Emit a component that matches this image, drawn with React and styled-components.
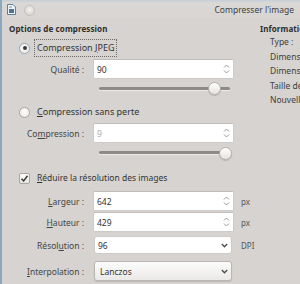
import React from 'react';
import styled, { createGlobalStyle } from 'styled-components';

const Global = createGlobalStyle`
  html, body { margin: 0; padding: 0; background: #d6d3d0; }
  body {
    width: 300px; height: 284px; overflow: hidden;
    font-family: "Noto Sans", "Open Sans", sans-serif;
    font-size: 8.5px; color: #3b3b3b;
  }
`;

const Window = styled.div`
  width: 300px; height: 284px; box-sizing: border-box;
  display: flex; flex-direction: column;
  border-left: 2px solid #8ea7ba;
  background: #d6d3d0; overflow: hidden;
`;

const TitleBar = styled.div`
  height: 19px; flex-shrink: 0;
  display: flex; align-items: center; gap: 8px;
  padding: 0 4px 0 5px;
  background: linear-gradient(#c3cfd9 0, #dad8d5 3px, #d8d5d2 100%);
`;

const Title = styled.div`
  margin-left: auto; padding-right: 2px;
  font-size: 8.5px; color: #404040; white-space: nowrap;
`;

const Body = styled.div`
  flex: 1; display: flex; padding-left: 7px;
`;

const LeftCol = styled.div`
  width: 251px; flex-shrink: 0; display: flex; flex-direction: column;
`;

const RightCol = styled.div`
  flex: 1; overflow: hidden; white-space: nowrap;
  display: flex; flex-direction: column;
`;

const Heading = styled.div`
  height: 12px; line-height: 12px; margin-top: 4px;
  font-weight: bold; font-size: 8px; color: #2e2e2e; letter-spacing: 0.1px;
  white-space: nowrap;
`;

const InfoItem = styled.div`
  height: 14.6px; line-height: 14.6px; padding-left: 10px;
  color: #404040;
  &:first-of-type { margin-top: 2px; }
`;

const OptionRow = styled.div`
  height: 16px; margin-top: ${p => p.$mt}px;
  display: flex; align-items: center; padding-left: 10px; gap: 4px;
`;

const Radio = styled.span`
  width: 11px; height: 11px; border-radius: 50%; box-sizing: border-box;
  border: 1px solid #a9a6a3;
  background: radial-gradient(circle at 50% 40%, #ffffff 0, #eeeceb 70%, #dedcda 100%);
  box-shadow: 0 0 0 1px ${p => (p.$checked ? '#c5d3de' : 'transparent')};
  display: flex; align-items: center; justify-content: center;
  &::after {
    content: ""; width: 4px; height: 4px; border-radius: 50%;
    background: ${p => (p.$checked ? '#3a3a3a' : 'transparent')};
  }
`;

const Check = styled.span`
  width: 11px; height: 11px; box-sizing: border-box; border-radius: 2px;
  border: 1px solid #a9a6a3;
  background: linear-gradient(#ffffff, #e6e4e2);
  display: flex; align-items: center; justify-content: center;
`;

const OptionLabel = styled.span`
  padding: 1px 2px; height: 14px; line-height: 14px;
  border: 1px ${p => (p.$focus ? 'dotted #6a6a6a' : 'solid transparent')};
  font-size: ${p => p.$size || 9}px; color: #333; white-space: nowrap;
`;

const FieldRow = styled.div`
  display: grid; grid-template-columns: 76px 142px auto;
  column-gap: 7px; align-items: center;
  height: ${p => p.$h || 20}px; margin-top: ${p => p.$mt}px;
`;

const FieldLabel = styled.span`
  text-align: right; white-space: nowrap; color: #454545;
  padding-right: 1px;
`;

const Input = styled.div`
  height: 100%; box-sizing: border-box;
  display: flex; align-items: center; padding-left: 3px;
  margin-left: 1px;
  background: #fff;
  border: 1px solid #cdcac7; border-top-color: #bfbcb9; border-radius: 2px;
  color: ${p => (p.$disabled ? '#aaa' : '#333')};
`;

const Combo = styled.div`
  height: 100%; box-sizing: border-box;
  display: flex; align-items: center; padding-left: ${p => (p.$flat ? 3 : 5)}px;
  margin-left: 2px; margin-right: 2px;
  border-radius: 3px;
  border: 1px solid ${p => (p.$flat ? '#cdcac7' : '#b9b6b3')};
  background: ${p => (p.$flat ? '#fff' : 'linear-gradient(#fcfcfc, #ebe9e7)')};
  box-shadow: ${p => (p.$flat ? 'none' : '0 1px 1px rgba(0,0,0,0.12)')};
  color: #333;
`;

const Trailing = styled.span`
  margin-left: auto; width: 14px; display: flex; justify-content: center;
`;

const Unit = styled.span`
  color: #555; font-size: 8px;
`;

const SliderRow = styled.div`
  height: ${p => p.$h}px; display: flex; align-items: center;
  padding-left: 90px;
`;

const Track = styled.div`
  width: 131px; height: 3px; border-radius: 2px; position: relative;
  background: #8d8b89; box-shadow: 0 1px 0 #ecebea;
`;

const Handle = styled.span`
  position: absolute; top: 50%; width: 11px; height: 11px;
  margin: -6px 0 0 -6px; border-radius: 50%;
  border: 1px solid #b3b0ad;
  background: linear-gradient(#ffffff, #e5e3e1);
  box-shadow: 0 1px 1px rgba(0,0,0,0.15);
`;

const Mn = styled.span`text-decoration: underline;`;

const Spinner = () => (
  <svg width="7" height="12" viewBox="0 0 7 12">
    <path d="M1 4.5 L3.5 2 L6 4.5" fill="none" stroke="#9a9896" strokeWidth="1" />
    <path d="M1 7.5 L3.5 10 L6 7.5" fill="none" stroke="#9a9896" strokeWidth="1" />
  </svg>
);

const Chevron = () => (
  <svg width="7" height="5" viewBox="0 0 7 5">
    <path d="M0.8 1 L3.5 3.8 L6.2 1" fill="none" stroke="#4a4a4a" strokeWidth="1.3" />
  </svg>
);

const DocIcon = () => (
  <svg width="9" height="11" viewBox="0 0 9 11">
    <path d="M0.5 0.5 H6 L8.5 3 V10.5 H0.5 Z" fill="#eef3f8" stroke="#5f7f9c" />
    <rect x="2" y="5" width="5" height="4" fill="#4d7397" />
    <path d="M2 3 H5" stroke="#7c97b0" />
  </svg>
);

const CircleBtn = styled.span`
  width: 9px; height: 9px; border-radius: 50%;
  background: radial-gradient(circle at 50% 40%, #f4f3f2, #cfccca);
  border: 1px solid #c3c0bd; margin-top: 1px;
`;

const CheckMark = () => (
  <svg width="9" height="9" viewBox="0 0 9 9">
    <path d="M1.5 4.8 L3.6 7 L7.6 1.8" fill="none" stroke="#333" strokeWidth="1.4" />
  </svg>
);

export default function App() {
  return (
    <>
      <Global />
      <Window>
        <TitleBar>
          <DocIcon />
          <CircleBtn />
          <Title>Compresser l'image</Title>
        </TitleBar>
        <Body>
          <LeftCol>
            <Heading>Options de compression</Heading>

            <OptionRow $mt={5}>
              <Radio $checked />
              <OptionLabel $focus>Compression <Mn>J</Mn>PEG</OptionLabel>
            </OptionRow>
            <FieldRow $mt={3}>
              <FieldLabel>Qualité :</FieldLabel>
              <Input>90<Trailing><Spinner /></Trailing></Input>
            </FieldRow>
            <SliderRow $h={18}>
              <Track><Handle style={{ left: '88%' }} /></Track>
            </SliderRow>

            <OptionRow $mt={7}>
              <Radio />
              <OptionLabel><Mn>C</Mn>ompression sans perte</OptionLabel>
            </OptionRow>
            <FieldRow $mt={3}>
              <FieldLabel>Co<Mn>m</Mn>pression :</FieldLabel>
              <Input $disabled>9<Trailing><Spinner /></Trailing></Input>
            </FieldRow>
            <SliderRow $h={19}>
              <Track><Handle style={{ left: '96%' }} /></Track>
            </SliderRow>

            <OptionRow $mt={8}>
              <Check><CheckMark /></Check>
              <OptionLabel $size={8.5}><Mn>R</Mn>éduire la résolution des images</OptionLabel>
            </OptionRow>
            <FieldRow $mt={5}>
              <FieldLabel><Mn>L</Mn>argeur :</FieldLabel>
              <Input>642<Trailing><Spinner /></Trailing></Input>
              <Unit>px</Unit>
            </FieldRow>
            <FieldRow $mt={1}>
              <FieldLabel><Mn>H</Mn>auteur :</FieldLabel>
              <Input>429<Trailing><Spinner /></Trailing></Input>
              <Unit>px</Unit>
            </FieldRow>
            <FieldRow $mt={4} $h={18}>
              <FieldLabel>Résol<Mn>u</Mn>tion :</FieldLabel>
              <Combo $flat>96<Trailing><Chevron /></Trailing></Combo>
              <Unit>DPI</Unit>
            </FieldRow>
            <FieldRow $mt={7}>
              <FieldLabel><Mn>I</Mn>nterpolation :</FieldLabel>
              <Combo>Lanczos<Trailing><Chevron /></Trailing></Combo>
            </FieldRow>
          </LeftCol>
          <RightCol>
            <Heading>Informations</Heading>
            <InfoItem>Type :</InfoItem>
            <InfoItem>Dimensions :</InfoItem>
            <InfoItem>Dimensions :</InfoItem>
            <InfoItem>Taille des données :</InfoItem>
            <InfoItem>Nouvelle taille :</InfoItem>
          </RightCol>
        </Body>
      </Window>
    </>
  );
}
